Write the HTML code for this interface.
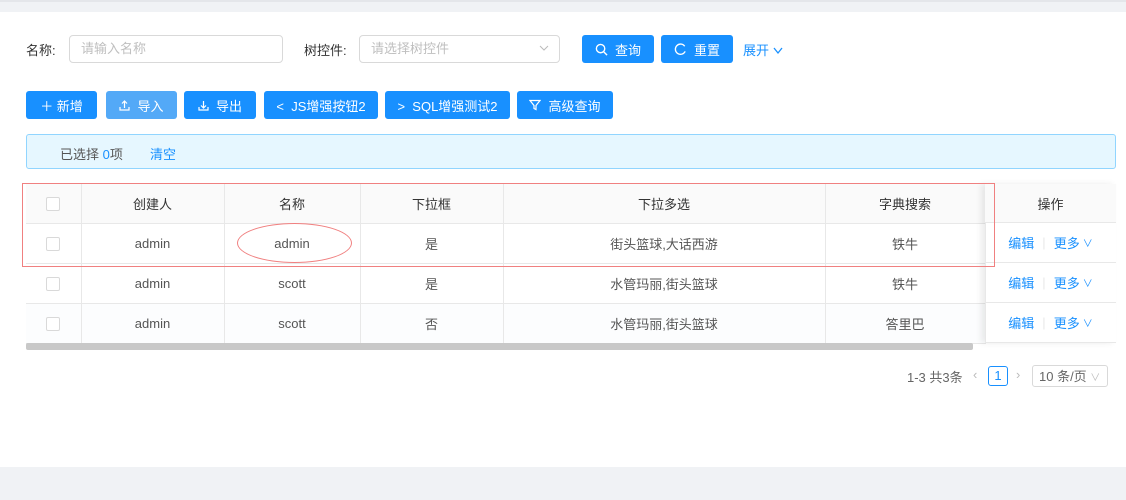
<!DOCTYPE html>
<html><head><meta charset="utf-8"><style>
*{box-sizing:border-box;margin:0;padding:0}
body{width:1126px;height:500px;overflow:hidden;background:#fff;font-family:"Liberation Sans","Noto Sans CJK SC",sans-serif;font-size:13px;color:#333;position:relative}
.abs{position:absolute}
.top{left:0;top:0;width:1126px;height:12px;background:#f0f2f5;border-top:2px solid #e4e6ea}
.bot{left:0;top:467px;width:1126px;height:33px;background:#f0f2f5}
.lbl{color:#333;font-size:13px}
.inp{border:1px solid #d9d9d9;border-radius:4px;height:28px;color:#bfbfbf;padding:6px 11px;font-size:13px;line-height:14px}
.btn{background:#1890ff;color:#fff;border-radius:3px;height:28px;display:flex;align-items:center;justify-content:center;font-size:13px;gap:7px}
.alert{left:26px;top:134px;width:1090px;height:35px;background:#e6f7ff;border:1px solid #91d5ff;border-radius:3px}
table{border-collapse:collapse;position:absolute;left:26px;top:184px;width:959px;table-layout:fixed}
td,th{height:40px;border-bottom:1px solid #e8e8e8;border-right:1px solid #e8e8e8;text-align:center;font-weight:normal;color:#555;font-size:13px}
th{background:#fafafa;color:#333;height:39px}
.cb{display:inline-block;width:14px;height:14px;border:1px solid #d9d9d9;border-radius:2px;background:#fff;vertical-align:middle}
.op{left:985px;top:184px;width:131px;box-shadow:-4px 0 6px rgba(0,0,0,.08)}
.op div{height:40px;border-bottom:1px solid #e8e8e8;display:flex;align-items:center;justify-content:center;color:#1890ff}
a{color:#1890ff}
</style></head><body>
<div class="abs top"></div>
<div class="abs bot"></div>

<div class="abs lbl" style="left:26px;top:40px">名称:</div>
<div class="abs inp" style="left:69px;top:35px;width:214px">请输入名称</div>
<div class="abs lbl" style="left:304px;top:40px">树控件:</div>
<div class="abs inp" style="left:359px;top:35px;width:201px">请选择树控件<svg style="position:absolute;right:10px;top:9px" width="10" height="7" viewBox="0 0 10 7" fill="none" stroke="#bbb" stroke-width="1"><path d="M1 1l4 4 4-4"/></svg></div>
<div class="abs btn" style="left:582px;top:35px;width:72px"><svg width="13" height="13" viewBox="0 0 14 14" fill="none" stroke="#fff" stroke-width="1.5"><circle cx="6" cy="6" r="4.5"/><path d="M9.5 9.5L13 13"/></svg>查询</div>
<div class="abs btn" style="left:661px;top:35px;width:72px"><svg width="13" height="13" viewBox="0 0 14 14" fill="none" stroke="#fff" stroke-width="1.5"><path d="M11.5 3.5A5.5 5.5 0 1 0 12 9"/></svg>重置</div>
<div class="abs" style="left:743px;top:40px;color:#1890ff">展开 <svg width="10" height="8" viewBox="0 0 10 8" fill="none" stroke="#1890ff" stroke-width="1.3"><path d="M1 1l4 5 4-5"/></svg></div>

<div class="abs btn" style="left:26px;top:91px;width:71px">＋ 新增</div>
<div class="abs btn" style="left:106px;top:91px;width:71px;background:#53a9f7"><svg width="11" height="11" viewBox="0 0 11 11" fill="none" stroke="#fff" stroke-width="1.2"><path d="M5.5 8V1M3 3.5l2.5-2.5 2.5 2.5M1 7v3h9V7"/></svg>导入</div>
<div class="abs btn" style="left:184px;top:91px;width:72px"><svg width="11" height="11" viewBox="0 0 11 11" fill="none" stroke="#fff" stroke-width="1.2"><path d="M5.5 1v7M3 5.5l2.5 2.5 2.5-2.5M1 7v3h9V7"/></svg>导出</div>
<div class="abs btn" style="left:264px;top:91px;width:114px">&lt;&nbsp; JS增强按钮2</div>
<div class="abs btn" style="left:385px;top:91px;width:125px">&gt;&nbsp; SQL增强测试2</div>
<div class="abs btn" style="left:517px;top:91px;width:96px"><svg width="12" height="12" viewBox="0 0 12 12" fill="none" stroke="#fff" stroke-width="1.2"><path d="M1 1.5h10L7 6.5v4L5 9.5v-3z"/></svg>高级查询</div>

<div class="abs alert"><span class="abs" style="left:33px;top:9px;color:#555">已选择 <span style="color:#1890ff">0</span>项</span><span class="abs" style="left:123px;top:9px;color:#1890ff">清空</span></div>

<table>
<colgroup><col style="width:55px"><col style="width:143px"><col style="width:136px"><col style="width:143px"><col style="width:322px"><col style="width:160px"></colgroup>
<tr><th><span class="cb"></span></th><th>创建人</th><th>名称</th><th>下拉框</th><th>下拉多选</th><th>字典搜索</th></tr>
<tr><td><span class="cb"></span></td><td>admin</td><td>admin</td><td>是</td><td>街头篮球,大话西游</td><td>铁牛</td></tr>
<tr><td><span class="cb"></span></td><td>admin</td><td>scott</td><td>是</td><td>水管玛丽,街头篮球</td><td>铁牛</td></tr>
<tr style="background:#fcfdfe"><td><span class="cb"></span></td><td>admin</td><td>scott</td><td>否</td><td>水管玛丽,街头篮球</td><td>答里巴</td></tr>
</table>
<div class="abs op">
<div style="background:#fafafa;color:#333;height:39px">操作</div>
<div>编辑 <span style="color:#e8e8e8;margin:0 8px">|</span> 更多 <span style="font-size:10px;margin-left:3px">∨</span></div>
<div>编辑 <span style="color:#e8e8e8;margin:0 8px">|</span> 更多 <span style="font-size:10px;margin-left:3px">∨</span></div>
<div>编辑 <span style="color:#e8e8e8;margin:0 8px">|</span> 更多 <span style="font-size:10px;margin-left:3px">∨</span></div>
</div>
<div class="abs" style="left:26px;top:343px;width:947px;height:7px;background:#c8c8c8;border-radius:2px"></div>

<div class="abs" style="left:22px;top:183px;width:973px;height:84px;border:1px solid #f08080"></div>
<div class="abs" style="left:237px;top:223px;width:115px;height:40px;border:1px solid #f08080;border-radius:50%"></div>

<div class="abs" style="left:907px;top:367px;color:#666">1-3 共3条</div>
<div class="abs" style="left:973px;top:367px;color:#bbb">‹</div>
<div class="abs" style="left:988px;top:366px;width:20px;height:20px;border:1px solid #1890ff;border-radius:3px;color:#1890ff;text-align:center;line-height:18px">1</div>
<div class="abs" style="left:1016px;top:367px;color:#bbb">›</div>
<div class="abs" style="left:1032px;top:365px;width:76px;height:22px;border:1px solid #d9d9d9;border-radius:3px;color:#666;padding:3px 6px;font-size:13px;line-height:15px">10 条/页 <span style="color:#bbb;font-size:10px">∨</span></div>
</body></html>
